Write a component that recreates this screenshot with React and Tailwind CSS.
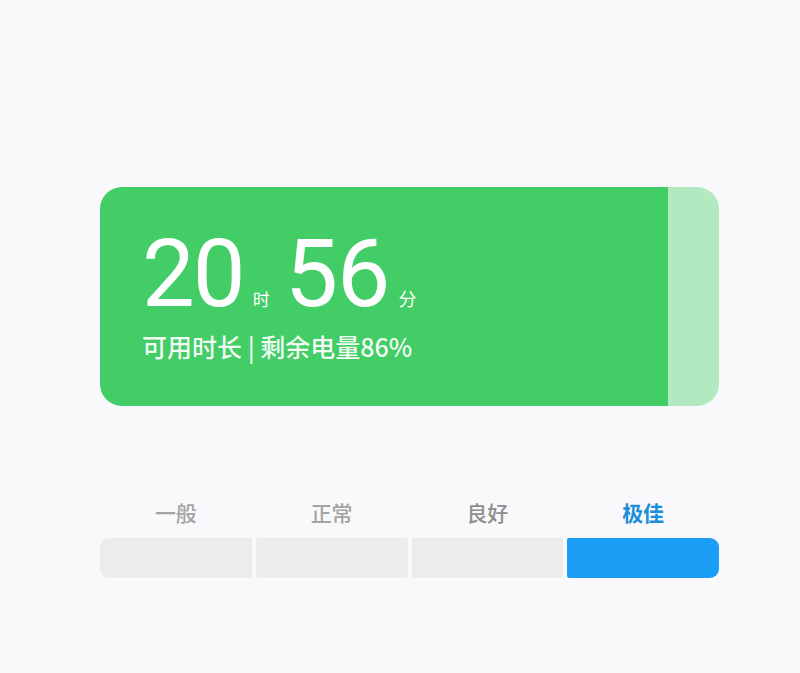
export default function App() {
  const cjk = { fontFamily: '"Noto Sans CJK SC", "Noto Sans", sans-serif' };
  return (
    <div className="w-[800px] h-[673px] bg-[#f9f9fb] overflow-hidden" style={cjk}>
      <div className="ml-[100px] w-[619px] pt-[187px]">
        <div className="flex h-[219px] rounded-[22px] overflow-hidden">
          <div className="flex-1 bg-[#42cd66] pl-[42px] pt-[39px] text-white">
            <div className="flex items-baseline">
              <span className="text-[94px] leading-none tracking-[-2px]" style={{ fontFamily: 'Roboto, sans-serif' }}>20</span>
              <span className="text-[17px] leading-none ml-[9px] mr-[15px]">时</span>
              <span className="text-[95px] leading-none tracking-[-1px]" style={{ fontFamily: 'Roboto, sans-serif' }}>56</span>
              <span className="text-[18px] leading-none ml-[9px]">分</span>
            </div>
            <div className="mt-[13px] text-[25px] font-medium leading-none text-white/95">可用时长 | 剩余电量86%</div>
          </div>
          <div className="w-[51px] bg-[#b2e9c1]"></div>
        </div>
        <div className="mt-[96px] grid grid-cols-4 gap-[4px]">
          <div className="text-center text-[21px] font-medium text-[#a3a3a3] leading-none">一般</div>
          <div className="text-center text-[21px] font-medium text-[#a3a3a3] leading-none">正常</div>
          <div className="text-center text-[21px] font-medium text-[#8e8e8e] leading-none">良好</div>
          <div className="text-center text-[21px] font-bold text-[#1c8fd9] leading-none">极佳</div>
        </div>
        <div className="mt-[15px] grid grid-cols-4 gap-[4px] h-[40px]">
          <div className="bg-[#ececee] rounded-l-[9px] rounded-r-[2px]"></div>
          <div className="bg-[#ececee] rounded-[2px]"></div>
          <div className="bg-[#ececee] rounded-[2px]"></div>
          <div className="bg-[#1a9ef6] rounded-r-[9px] rounded-l-[2px]"></div>
        </div>
      </div>
    </div>
  );
}
